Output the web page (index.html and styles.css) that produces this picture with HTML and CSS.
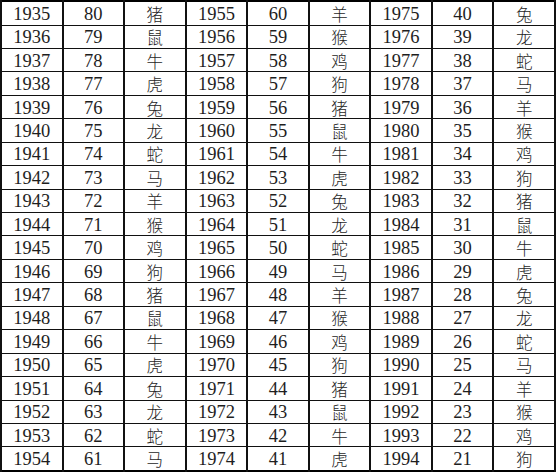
FILE: index.html
```html
<!DOCTYPE html>
<html lang="zh">
<head>
<meta charset="utf-8">
<title>生肖年龄对照表</title>
<link rel="stylesheet" href="styles.css">
</head>
<body>
<table class="chart">
<tbody>
<tr><td class="num">1935</td><td class="num">80</td><td class="zh">猪</td><td class="num">1955</td><td class="num">60</td><td class="zh">羊</td><td class="num">1975</td><td class="num">40</td><td class="zh">兔</td></tr>
<tr><td class="num">1936</td><td class="num">79</td><td class="zh">鼠</td><td class="num">1956</td><td class="num">59</td><td class="zh">猴</td><td class="num">1976</td><td class="num">39</td><td class="zh">龙</td></tr>
<tr><td class="num">1937</td><td class="num">78</td><td class="zh">牛</td><td class="num">1957</td><td class="num">58</td><td class="zh">鸡</td><td class="num">1977</td><td class="num">38</td><td class="zh">蛇</td></tr>
<tr><td class="num">1938</td><td class="num">77</td><td class="zh">虎</td><td class="num">1958</td><td class="num">57</td><td class="zh">狗</td><td class="num">1978</td><td class="num">37</td><td class="zh">马</td></tr>
<tr><td class="num">1939</td><td class="num">76</td><td class="zh">兔</td><td class="num">1959</td><td class="num">56</td><td class="zh">猪</td><td class="num">1979</td><td class="num">36</td><td class="zh">羊</td></tr>
<tr><td class="num">1940</td><td class="num">75</td><td class="zh">龙</td><td class="num">1960</td><td class="num">55</td><td class="zh">鼠</td><td class="num">1980</td><td class="num">35</td><td class="zh">猴</td></tr>
<tr><td class="num">1941</td><td class="num">74</td><td class="zh">蛇</td><td class="num">1961</td><td class="num">54</td><td class="zh">牛</td><td class="num">1981</td><td class="num">34</td><td class="zh">鸡</td></tr>
<tr><td class="num">1942</td><td class="num">73</td><td class="zh">马</td><td class="num">1962</td><td class="num">53</td><td class="zh">虎</td><td class="num">1982</td><td class="num">33</td><td class="zh">狗</td></tr>
<tr><td class="num">1943</td><td class="num">72</td><td class="zh">羊</td><td class="num">1963</td><td class="num">52</td><td class="zh">兔</td><td class="num">1983</td><td class="num">32</td><td class="zh">猪</td></tr>
<tr><td class="num">1944</td><td class="num">71</td><td class="zh">猴</td><td class="num">1964</td><td class="num">51</td><td class="zh">龙</td><td class="num">1984</td><td class="num">31</td><td class="zh">鼠</td></tr>
<tr><td class="num">1945</td><td class="num">70</td><td class="zh">鸡</td><td class="num">1965</td><td class="num">50</td><td class="zh">蛇</td><td class="num">1985</td><td class="num">30</td><td class="zh">牛</td></tr>
<tr><td class="num">1946</td><td class="num">69</td><td class="zh">狗</td><td class="num">1966</td><td class="num">49</td><td class="zh">马</td><td class="num">1986</td><td class="num">29</td><td class="zh">虎</td></tr>
<tr><td class="num">1947</td><td class="num">68</td><td class="zh">猪</td><td class="num">1967</td><td class="num">48</td><td class="zh">羊</td><td class="num">1987</td><td class="num">28</td><td class="zh">兔</td></tr>
<tr><td class="num">1948</td><td class="num">67</td><td class="zh">鼠</td><td class="num">1968</td><td class="num">47</td><td class="zh">猴</td><td class="num">1988</td><td class="num">27</td><td class="zh">龙</td></tr>
<tr><td class="num">1949</td><td class="num">66</td><td class="zh">牛</td><td class="num">1969</td><td class="num">46</td><td class="zh">鸡</td><td class="num">1989</td><td class="num">26</td><td class="zh">蛇</td></tr>
<tr><td class="num">1950</td><td class="num">65</td><td class="zh">虎</td><td class="num">1970</td><td class="num">45</td><td class="zh">狗</td><td class="num">1990</td><td class="num">25</td><td class="zh">马</td></tr>
<tr><td class="num">1951</td><td class="num">64</td><td class="zh">兔</td><td class="num">1971</td><td class="num">44</td><td class="zh">猪</td><td class="num">1991</td><td class="num">24</td><td class="zh">羊</td></tr>
<tr><td class="num">1952</td><td class="num">63</td><td class="zh">龙</td><td class="num">1972</td><td class="num">43</td><td class="zh">鼠</td><td class="num">1992</td><td class="num">23</td><td class="zh">猴</td></tr>
<tr><td class="num">1953</td><td class="num">62</td><td class="zh">蛇</td><td class="num">1973</td><td class="num">42</td><td class="zh">牛</td><td class="num">1993</td><td class="num">22</td><td class="zh">鸡</td></tr>
<tr><td class="num">1954</td><td class="num">61</td><td class="zh">马</td><td class="num">1974</td><td class="num">41</td><td class="zh">虎</td><td class="num">1994</td><td class="num">21</td><td class="zh">狗</td></tr>
</tbody>
</table>
</body>
</html>
```

FILE: styles.css
```css
html, body {
  margin: 0;
  padding: 0;
  background: #ffffff;
}

.chart {
  width: 556px;
  height: 472px;
  table-layout: fixed;
  border-collapse: collapse;
  border: 2px solid #000;
  color: #1e1e1e;
}

.chart td {
  border-top: 1px solid #111;
  border-bottom: 1px solid #111;
  border-left: 2px solid #111;
  border-right: 2px solid #111;
  text-align: center;
  vertical-align: middle;
  padding: 1px 0 0 0;
  height: 18px;
  line-height: 18px;
}

.chart .num {
  font-family: "Liberation Serif", "Times New Roman", serif;
  font-size: 18.5px;
}

.chart .zh {
  font-family: "Noto Sans CJK SC", sans-serif;
  font-weight: 300;
  font-size: 16.5px;
}
```
